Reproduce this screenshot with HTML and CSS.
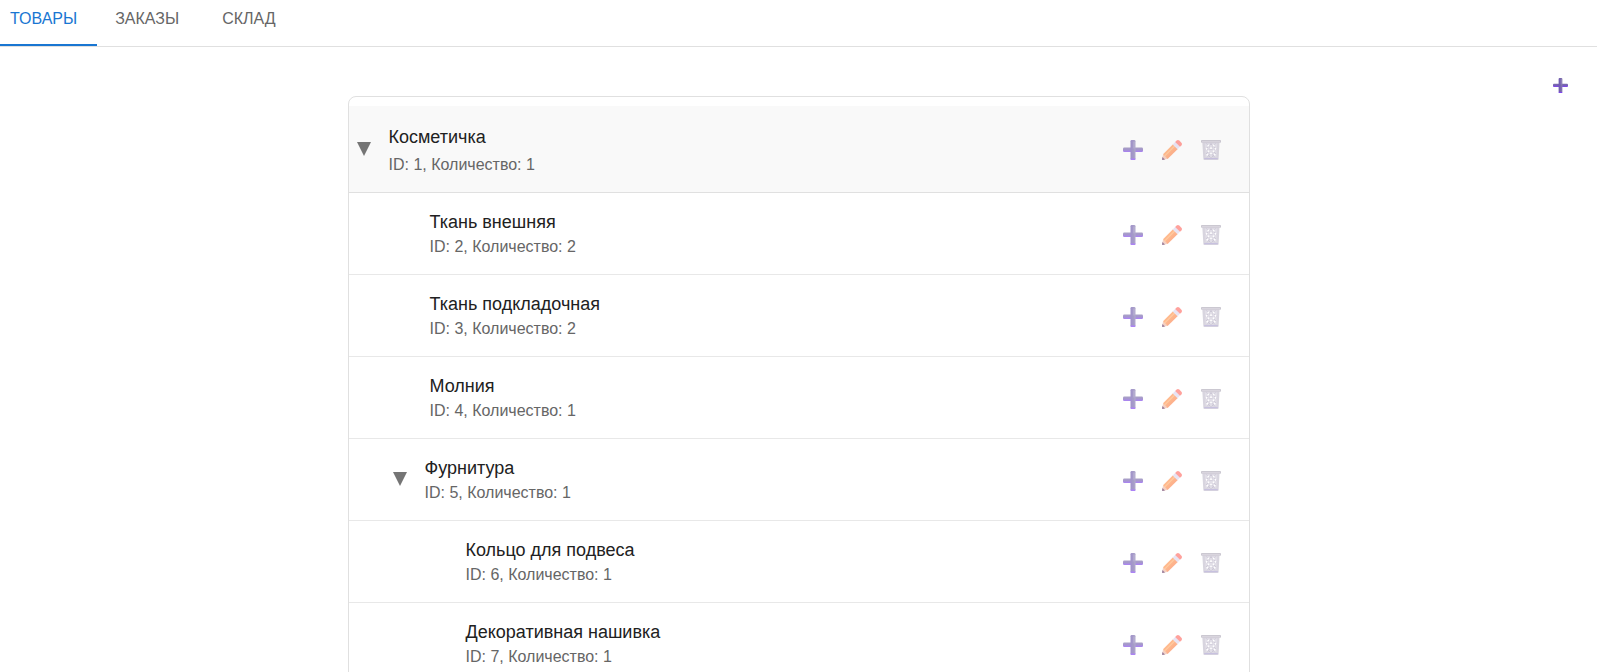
FILE: index.html
```html
<!DOCTYPE html>
<html lang="ru">
<head>
<meta charset="utf-8">
<meta name="viewport" content="width=device-width, initial-scale=1">
<title>Товары</title>
<link rel="stylesheet" href="styles.css">
</head>
<body>
<svg class="defs" width="0" height="0" aria-hidden="true">
  <defs>
    <linearGradient id="g-plus-h" x1="0" y1="0" x2="0" y2="1"><stop offset="0" stop-color="#7d70a8"/><stop offset=".5" stop-color="#7660b4"/><stop offset="1" stop-color="#8040f4"/></linearGradient>
    <linearGradient id="g-plus-v" x1="0" y1="0" x2="1" y2="0"><stop offset="0" stop-color="#6e58b0"/><stop offset=".6" stop-color="#7868ac"/><stop offset="1" stop-color="#8a7eb2"/></linearGradient>
    <linearGradient id="g-pencil" x1="0" y1="0" x2="1" y2="1"><stop offset="0" stop-color="#ff9d5c"/><stop offset=".45" stop-color="#ff9350"/><stop offset="1" stop-color="#f8704f"/></linearGradient>
  </defs>
  <symbol id="i-plus" viewBox="0 0 20 20">
    <rect x="0" y="7.500" width="20" height="4.500" rx="1.200" fill="url(#g-plus-h)"/>
    <rect x="7.500" y="0" width="5" height="20" rx="1.200" fill="url(#g-plus-v)"/>
    <path d="M7.500 18.500h5q0 1.500-1.200 1.500H8.700q-1.200 0-1.200-1.500z" fill="#8040f4"/>
    <path d="M11 2v6" stroke="#9a8ec0" stroke-width="1" stroke-linecap="round"/>
  </symbol>
  <symbol id="i-pencil" viewBox="0 0 20 20">
    <path d="M1.200 14.200 0 19q-.1 1.100 1 1l4.800-1.200z" fill="#efb9a4"/>
    <path d="M.5 17 0 19q-.1 1.100 1 1l2-.5z" fill="#6b4470"/>
    <path d="M1 14.200 11 4.200l4.800 4.800L5.600 19z" fill="url(#g-pencil)"/>
    <path d="M2.800 15.800 12.800 5.800" stroke="#ffb070" stroke-width="1.200"/>
    <path d="M10.700 4.500 13.400 1.800l4.800 4.800-2.700 2.700z" fill="#dcd7ee"/>
    <path d="M13.200 2 14.600.6q1.300-1.200 2.700 0l2.100 2.100q1.200 1.300 0 2.700L18 6.800z" fill="#ff7068"/>
  </symbol>
  <symbol id="i-trash" viewBox="0 0 20 20">
    <path d="M1.300 2h17.200l-.9 17q-.1 1-1 1H3.400q-.9 0-1-1z" fill="#c4bfce"/>
    <path d="M3.800 3.500h12.400l-.8 14H4.600z" fill="#d2cddb"/>
    <path d="M5.500 3.500 15 14M9.500 3.500l5.800 6M5 8l9 9.500M5 13l4.500 4.500M14.500 3.500 5 14M10.500 3.500 4.700 9.500M15 8l-9 9.500M15 13l-4.500 4.500" fill="none" stroke="#aaa3ba" stroke-width=".8"/>
    <path d="M6.500 4.700h1.800v1.800H6.500zM11.700 4.700h1.800v1.800h-1.800zM9.100 7.200h1.800V9H9.100zM4.900 8h1.400v1.800H4.900zM13.700 8h1.400v1.800h-1.400zM6.700 10.200h1.800V12H6.700zM11.500 10.200h1.800V12h-1.800zM9.100 12.500h1.800v1.800H9.100zM5.500 13.700h1.600v1.800H5.500zM12.900 13.700h1.600v1.800h-1.600z" fill="#fff"/>
    <path d="M3.200 18h13.600v1.200H3.200z" fill="#aaa0ce"/>
    <rect x="0" y="0" width="20" height="2.800" rx=".8" fill="#b0abba"/>
    <path d="M1 1.800h18" stroke="#d5d1dc" stroke-width=".8"/>
  </symbol>
</svg>

<nav class="tabs">
  <a class="tab tab-active" href="#products" aria-current="page">ТОВАРЫ</a>
  <a class="tab" href="#orders">ЗАКАЗЫ</a>
  <a class="tab" href="#stock">СКЛАД</a>
</nav>

<main class="page">
  <div class="toolbar">
    <button class="add" type="button" aria-label="Добавить товар"><svg class="icon-small" aria-hidden="true"><use href="#i-plus"/></svg></button>
  </div>

  <ul class="tree">
    <li class="row row-root">
      <button class="toggle" type="button" aria-label="Свернуть"><svg class="arrow" viewBox="0 0 14 14" aria-hidden="true"><path d="M0 0h14L7 14z"/></svg></button>
      <div class="text"><span class="name">Косметичка</span><span class="meta">ID: 1, Количество: 1</span></div>
      <div class="actions"><button type="button" aria-label="Добавить"><svg class="icon"><use href="#i-plus"/></svg></button><button type="button" aria-label="Изменить"><svg class="icon"><use href="#i-pencil"/></svg></button><button type="button" aria-label="Удалить"><svg class="icon"><use href="#i-trash"/></svg></button></div>
    </li>
    <li class="row leaf-1">
      <div class="text"><span class="name">Ткань внешняя</span><span class="meta">ID: 2, Количество: 2</span></div>
      <div class="actions"><button type="button" aria-label="Добавить"><svg class="icon"><use href="#i-plus"/></svg></button><button type="button" aria-label="Изменить"><svg class="icon"><use href="#i-pencil"/></svg></button><button type="button" aria-label="Удалить"><svg class="icon"><use href="#i-trash"/></svg></button></div>
    </li>
    <li class="row leaf-1">
      <div class="text"><span class="name">Ткань подкладочная</span><span class="meta">ID: 3, Количество: 2</span></div>
      <div class="actions"><button type="button" aria-label="Добавить"><svg class="icon"><use href="#i-plus"/></svg></button><button type="button" aria-label="Изменить"><svg class="icon"><use href="#i-pencil"/></svg></button><button type="button" aria-label="Удалить"><svg class="icon"><use href="#i-trash"/></svg></button></div>
    </li>
    <li class="row leaf-1">
      <div class="text"><span class="name">Молния</span><span class="meta">ID: 4, Количество: 1</span></div>
      <div class="actions"><button type="button" aria-label="Добавить"><svg class="icon"><use href="#i-plus"/></svg></button><button type="button" aria-label="Изменить"><svg class="icon"><use href="#i-pencil"/></svg></button><button type="button" aria-label="Удалить"><svg class="icon"><use href="#i-trash"/></svg></button></div>
    </li>
    <li class="row branch-1">
      <button class="toggle" type="button" aria-label="Свернуть"><svg class="arrow" viewBox="0 0 14 14" aria-hidden="true"><path d="M0 0h14L7 14z"/></svg></button>
      <div class="text"><span class="name">Фурнитура</span><span class="meta">ID: 5, Количество: 1</span></div>
      <div class="actions"><button type="button" aria-label="Добавить"><svg class="icon"><use href="#i-plus"/></svg></button><button type="button" aria-label="Изменить"><svg class="icon"><use href="#i-pencil"/></svg></button><button type="button" aria-label="Удалить"><svg class="icon"><use href="#i-trash"/></svg></button></div>
    </li>
    <li class="row leaf-2">
      <div class="text"><span class="name">Кольцо для подвеса</span><span class="meta">ID: 6, Количество: 1</span></div>
      <div class="actions"><button type="button" aria-label="Добавить"><svg class="icon"><use href="#i-plus"/></svg></button><button type="button" aria-label="Изменить"><svg class="icon"><use href="#i-pencil"/></svg></button><button type="button" aria-label="Удалить"><svg class="icon"><use href="#i-trash"/></svg></button></div>
    </li>
    <li class="row leaf-2">
      <div class="text"><span class="name">Декоративная нашивка</span><span class="meta">ID: 7, Количество: 1</span></div>
      <div class="actions"><button type="button" aria-label="Добавить"><svg class="icon"><use href="#i-plus"/></svg></button><button type="button" aria-label="Изменить"><svg class="icon"><use href="#i-pencil"/></svg></button><button type="button" aria-label="Удалить"><svg class="icon"><use href="#i-trash"/></svg></button></div>
    </li>
  </ul>
</main>
</body>
</html>
```

FILE: styles.css
```css
* { box-sizing: border-box; }

html { height: 100%; overflow: hidden; }

body {
  margin: 0;
  height: 100%;
  overflow: hidden;
  background: #fff;
  color: #212121;
  font-family: "Liberation Sans", Arial, sans-serif;
  font-size: 16px;
}

button {
  padding: 0;
  border: 0;
  background: none;
  cursor: pointer;
}

.defs { position: absolute; }

.tabs {
  display: flex;
  border-bottom: 1px solid #e0e0e0;
}

.tab {
  padding: 10px 20px 16px 18px;
  border-bottom: 2px solid transparent;
  color: #666;
  line-height: 18px;
  text-decoration: none;
}

.tab + .tab + .tab { padding-left: 23px; }

.tab-active {
  padding-left: 10px;
  border-bottom-color: #1976d2;
  color: #1976d2;
}

.toolbar {
  display: flex;
  justify-content: flex-end;
  padding: 31px 29px 0;
}

.add { display: flex; }

.icon-small {
  width: 15px;
  height: 15px;
}

.tree {
  width: calc(100% - 32px);
  max-width: 902px;
  margin: 3px auto 0;
  padding: 9px 0;
  border: 1px solid #e0e0e0;
  border-radius: 8px;
  list-style: none;
}

.row {
  display: flex;
  align-items: center;
  padding: 17px 28px 15px 8px;
  border-bottom: 1px solid #e8e8e8;
}

.row-root {
  padding-top: 19px;
  background: #f9f9f9;
  border-bottom-color: #e0e0e0;
}

.leaf-1 { padding-left: 81px; }
.branch-1 { padding-left: 44px; }
.leaf-2 { padding-left: 117px; }

.toggle {
  display: flex;
  width: 32px;
  padding-bottom: 4px;
}

.arrow {
  width: 14px;
  height: 14px;
  fill: #757575;
}

.text {
  display: flex;
  flex: 1;
  flex-direction: column;
}

.row-root .text { gap: 3px; }

.name {
  font-size: 18px;
  line-height: 25px;
}

.meta {
  color: #666;
  line-height: 24px;
}

.actions {
  display: flex;
  gap: 19px;
  padding-top: 1px;
}

.row-root .actions { padding: 0 0 2px; }

.actions button { display: flex; }

.icon {
  width: 20px;
  height: 20px;
  opacity: .65;
}
```
